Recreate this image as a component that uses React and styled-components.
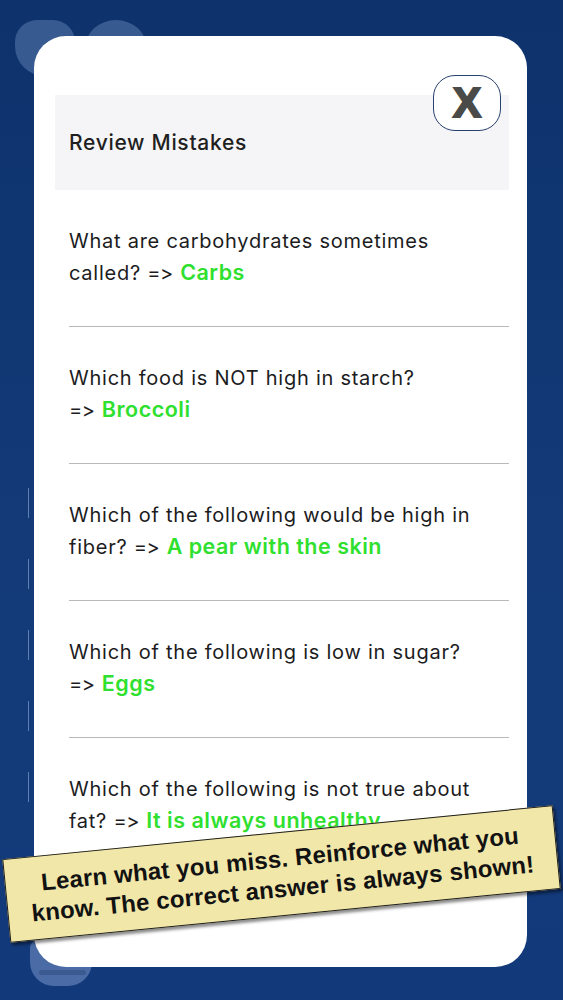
import React from "react";
import styled, { createGlobalStyle } from "styled-components";

const mistakes = [
  { q: "What are carbohydrates sometimes called?", a: "Carbs" },
  { q: "Which food is NOT high in starch?", a: "Broccoli" },
  { q: "Which of the following would be high in fiber?", a: "A pear with the skin" },
  { q: "Which of the following is low in sugar?", a: "Eggs" },
  { q: "Which of the following is not true about fat?", a: "It is always unhealthy" },
];

const App = () => {
  return (
    <>
      <GlobalStyle />
      <Screen>
        <GhostRow>
          <GhostIcon />
          <GhostIcon $round />
        </GhostRow>
        <GhostBottom />
        <EdgeArcs />
        <Modal>
          <Header>
            <h1>Review Mistakes</h1>
          </Header>
          <CloseButton aria-label="close">X</CloseButton>
          <List>
            {mistakes.map((m) => (
              <Row key={m.a}>
                {m.q} <Arrow>{"=>"}</Arrow>
                {"\u00a0"}
                <Answer>{m.a}</Answer>
              </Row>
            ))}
          </List>
        </Modal>
        <Banner>
          Learn what you miss. Reinforce what you know. The correct answer is
          always shown!
        </Banner>
      </Screen>
    </>
  );
};

const GlobalStyle = createGlobalStyle`
  html, body {
    margin: 0;
    padding: 0;
    background: #0f3570;
  }
  * { box-sizing: border-box; }
`;

const Screen = styled.main`
  position: relative;
  width: 563px;
  height: 1000px;
  overflow: hidden;
  background: linear-gradient(180deg, #0d326c 0%, #143b78 55%, #12397a 100%);
  padding: 36px 36px 33px 34px;
  display: flex;
  font-family: Inter, "Liberation Sans", sans-serif;
  font-feature-settings: "calt" 0, "liga" 0;
`;

const GhostRow = styled.div`
  position: absolute;
  left: 15px;
  top: 20px;
  display: flex;
  gap: 10px;
`;

const GhostIcon = styled.div`
  width: ${(p) => (p.$round ? 62 : 60)}px;
  height: 56px;
  border-radius: ${(p) => (p.$round ? "50% 50% 20px 20px" : "22px 22px 30px 30px")};
  background: rgba(120, 150, 200, 0.4);
`;

const GhostBottom = styled.div`
  position: absolute;
  left: 30px;
  top: 940px;
  width: 62px;
  height: 46px;
  border-radius: 8px 8px 24px 24px;
  background: rgba(120, 150, 200, 0.55);
  &::after {
    content: "";
    position: absolute;
    left: 9px;
    right: 6px;
    top: 30px;
    height: 5px;
    border-radius: 3px;
    background: #3c5a92;
  }
`;

const EdgeArcs = styled.div`
  position: absolute;
  left: 28px;
  top: 488px;
  width: 6px;
  height: 330px;
  background: repeating-linear-gradient(
    180deg,
    rgba(170, 195, 235, 0.5) 0 30px,
    transparent 30px 71px
  );
  -webkit-mask: linear-gradient(90deg, #000 0 1.5px, transparent 1.5px);
  mask: linear-gradient(90deg, #000 0 1.5px, transparent 1.5px);
`;

const Modal = styled.section`
  position: relative;
  flex: 1;
  background: #ffffff;
  border-radius: 32px;
  overflow: hidden;
  padding: 59px 18px 0 21px;
  display: flex;
  flex-direction: column;
`;

const Header = styled.header`
  height: 95px;
  background: #f5f4f6;
  display: flex;
  align-items: center;
  padding-left: 14px;
  h1 {
    margin: 0;
    font-size: 21px;
    font-weight: 500;
    color: #1f1f21;
    letter-spacing: 0.7px;
  }
`;

const CloseButton = styled.button`
  position: absolute;
  top: 39px;
  right: 26px;
  width: 68px;
  height: 56px;
  border: 1.5px solid #27406d;
  border-radius: 22px;
  background: #ffffff;
  color: #4a4a48;
  font-family: "Liberation Sans", Arial, sans-serif;
  font-weight: 900;
  font-size: 42px;
  line-height: 1;
  padding: 0;
  display: flex;
  align-items: center;
  justify-content: center;
  -webkit-text-stroke: 2px #4a4a48;
`;

const List = styled.div`
  display: flex;
  flex-direction: column;
  padding-left: 14px;
`;

const Row = styled.p`
  margin: 0;
  padding: 36px 24px 37px 0;
  border-bottom: 1px solid #b9b9bc;
  font-size: 20px;
  line-height: 31px;
  letter-spacing: 0.75px;
  color: #1c1c1e;
`;

const Arrow = styled.span`
  letter-spacing: -0.5px;
  margin-right: 1px;
`;

const Answer = styled.span`
  color: #2fe02f;
  font-weight: 600;
  font-size: 21.5px;
  letter-spacing: 0.5px;
`;

const Banner = styled.div`
  position: absolute;
  left: 5px;
  top: 832px;
  width: 553px;
  height: 84px;
  transform: rotate(-5.6deg);
  background: #f1e7a9;
  border: 1.5px solid #1c1c1c;
  box-shadow: 2px 3px 3px rgba(0, 0, 0, 0.45);
  display: flex;
  align-items: center;
  justify-content: center;
  text-align: center;
  padding: 0 14px;
  font-family: "Liberation Sans", Arial, sans-serif;
  font-weight: 700;
  font-size: 24px;
  line-height: 30px;
  letter-spacing: 0.2px;
  color: #121212;
`;

export default App;
